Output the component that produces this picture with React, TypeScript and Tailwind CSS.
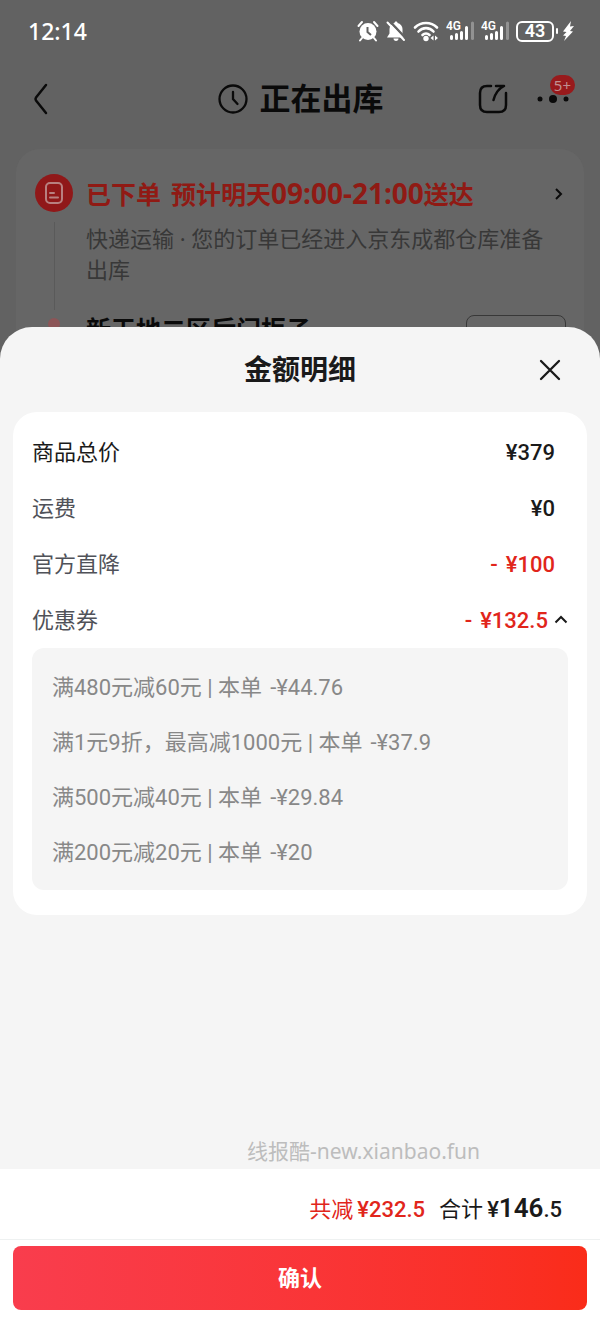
import { useState } from 'react'

const summaryRows = [
  { label: '商品总价', value: '¥379', strong: true, discount: false },
  { label: '运费', value: '¥0', strong: false, discount: false },
  { label: '官方直降', value: '¥100', strong: false, discount: true },
]

const coupons = [
  { rule: '满480元减60元', value: '-¥44.76' },
  { rule: '满1元9折，最高减1000元', value: '-¥37.9' },
  { rule: '满500元减40元', value: '-¥29.84' },
  { rule: '满200元减20元', value: '-¥20' },
]

const SignalIcon = () => (
  <svg viewBox="0 0 28 22" className="h-[22px] w-7" aria-hidden="true">
    <text x="0" y="10" fontSize="12" fontWeight="600" fill="#fff" fontFamily="Roboto, sans-serif">
      4G
    </text>
    <g strokeWidth="3" strokeLinecap="round">
      <path d="M5.5 18.5v-2M10.500 18.500v-4M15.500 18.500v-6M20.500 18.500v-11" stroke="#fff" />
      <path d="M26.500 18.500V3" stroke="#929292" />
    </g>
  </svg>
)

const StatusBar = () => (
  <div className="flex h-[62px] items-center justify-between pl-7 pr-[26px] text-white">
    <time className="text-[23px] font-medium">12:14</time>
    <div className="flex items-center gap-[7px]">
      <svg viewBox="0 0 22 22" className="size-[22px]" fill="none" stroke="#fff" aria-hidden="true">
        <circle cx="11" cy="11.500" r="8.500" fill="#fff" stroke="none" />
        <path d="M1.500 6 5 2M20.500 6 17 2M5 18l-2 2.500M17 18l2 2.500" strokeWidth="2" strokeLinecap="round" />
        <path d="M10.500 7v5l3.500 3" stroke="#626262" strokeWidth="2" />
      </svg>
      <svg viewBox="0 0 20 22" className="h-[22px] w-5" aria-hidden="true">
        <path d="M10 1.500c1 0 1.500.6 1.500 1.400C14.500 3.600 16.500 6 16.500 9v4.500l2.500 4H1l2.500-4V9c0-3 2-5.400 5-6.100 0-.8.5-1.400 1.500-1.400Z" fill="#fff" />
        <path d="M7.500 18.500h5c0 1.500-1 2.500-2.500 2.500s-2.500-1-2.500-2.500Z" fill="#fff" />
        <path d="m3.500 1 16 17" stroke="#626262" strokeWidth="2.500" />
        <path d="m1.500 2.500 16.500 17.500" stroke="#fff" strokeWidth="2" strokeLinecap="round" />
      </svg>
      <svg viewBox="0 0 26 22" className="h-[22px] w-[26px]" fill="none" stroke="#fff" strokeWidth="2.600" strokeLinecap="round" aria-hidden="true">
        <path d="M2 7.500c6-6 16-6 22 0M5.500 11.500c4-4.500 11-4.500 15 0M9.500 15c2-2 5-2 7 0" />
        <circle cx="13" cy="18.500" r="2.700" fill="#fff" stroke="none" />
        <path d="m20.500 15.500-3 2.500 3 2.500v-5ZM22 15.500l3 2.500-3 2.500v-5Z" fill="#fff" stroke="none" />
      </svg>
      <SignalIcon />
      <SignalIcon />
      <div className="flex items-center">
        <span className="flex h-[21px] w-[38px] items-center justify-center rounded-[6px] border-2 border-white font-[Roboto] text-lg font-semibold leading-none">
          43
        </span>
        <span className="ml-0.5 h-1.5 w-0.5 rounded bg-white" />
        <svg viewBox="0 0 12 22" className="ml-1 h-[22px] w-3" fill="#fff" aria-hidden="true">
          <path d="M9 1 1 11.500l3.500.5L1 15.500l3 .5-2 5 9-9.500-3-.5 4-5-4 .5Z" />
        </svg>
      </div>
    </div>
  </div>
)

const OrderHeader = () => (
  <header className="flex h-[87px] items-center justify-between pb-[14px] pl-7 pr-[27px] text-[#0a0a0a]">
    <button aria-label="返回" className="w-24">
      <svg viewBox="0 0 26 34" className="h-[34px] w-[26px]" fill="none" stroke="currentColor" strokeWidth="2.500" strokeLinecap="round" strokeLinejoin="round">
        <path d="M18 3 8 15.500q-1 1.500 0 3L18 31" />
      </svg>
    </button>
    <h1 className="flex items-center gap-3 text-[31px] font-bold">
      <svg viewBox="0 0 30 30" className="size-[30px]" fill="none" stroke="currentColor" strokeWidth="2.300" strokeLinecap="round" aria-hidden="true">
        <circle cx="15" cy="15" r="13.500" />
        <path d="M15 8v7l4.500 5" />
      </svg>
      正在出库
    </h1>
    <div className="flex items-center gap-6">
      <button aria-label="分享">
        <svg viewBox="0 0 32 32" className="size-8" fill="none" stroke="currentColor" strokeWidth="2.500" strokeLinecap="round" strokeLinejoin="round">
          <path d="M14 3h-4Q3 3 3 10v12q0 7 7 7h12q7 0 7-7V10" />
          <path d="M19 3h8c-6 3-9 8-10.500 14" />
        </svg>
      </button>
      <button aria-label="更多" className="relative">
        <svg viewBox="0 0 40 32" className="h-8 w-10" fill="currentColor">
          <circle cx="7" cy="16" r="2.500" />
          <circle cx="20" cy="16" r="4" />
          <circle cx="33" cy="16" r="2.500" />
        </svg>
        <span className="absolute -right-0.5 -top-2 rounded-full bg-[#981a1c] px-1 text-[15px] leading-5 text-[#c09090]">5+</span>
      </button>
    </div>
  </header>
)

const DeliveryCard = () => (
  <section className="mx-4 flex h-[220px] gap-[13px] rounded-3xl bg-[#666] pl-[19px] pr-[18px] pt-[25px]">
    <div className="flex w-[38px] flex-col items-center">
      <span className="flex size-[38px] shrink-0 items-center justify-center rounded-full bg-[#901819]">
        <svg viewBox="0 0 22 24" className="h-6 w-[22px]" fill="none" stroke="#b88080" strokeWidth="2" strokeLinecap="round" aria-hidden="true">
          <rect x="3" y="2" width="16" height="20" rx="4" />
          <path d="M7 12h4M7 16.500h8" />
        </svg>
      </span>
      <span className="mt-2.5 h-[88px] w-px bg-[#5a5a5a]" />
      <span className="mt-2 size-3 rounded-full bg-[#8c5557]" />
    </div>
    <div className="min-w-0 flex-1">
      <div className="flex items-center justify-between">
        <h2 className="flex items-baseline text-[25px] font-bold leading-[38px] text-[#901a14]">
          <span className="mr-2.5">已下单</span>
          <span>预计明天</span>
          <span className="text-[28px]">09:00-21:00</span>
          <span>送达</span>
        </h2>
        <svg viewBox="0 0 12 16" className="h-4 w-3" fill="none" stroke="#0a0a0a" strokeWidth="2" aria-hidden="true">
          <path d="m2 3 5 5-5 5" />
        </svg>
      </div>
      <p className="mt-2.5 pr-3.5 text-[22px] leading-[31px] text-[#383838]">快递运输 · 您的订单已经进入京东成都仓库准备出库</p>
      <div className="mt-6 flex justify-between">
        <strong className="text-[25px] leading-10 text-[#0a0a0a]">新天地二区后门柜子</strong>
        <button aria-label="修改地址" className="mt-1.5 h-10 w-[100px] rounded-lg border border-[#383838]" />
      </div>
    </div>
  </section>
)

const PriceSheet = () => {
  const [showCoupons, setShowCoupons] = useState(true)

  return (
    <div
      role="dialog"
      aria-labelledby="sheet-title"
      className="flex flex-1 flex-col rounded-t-[32px] bg-[#f5f5f5] font-[Roboto,'Noto_Sans_CJK_SC',sans-serif] text-[#1a1a1a]"
    >
      <header className="grid h-[85px] grid-cols-[1fr_auto_1fr] items-center px-9">
        <h2 id="sheet-title" className="col-start-2 pt-0.5 text-[28px] font-bold">金额明细</h2>
        <button aria-label="关闭" className="justify-self-end">
          <svg viewBox="0 0 28 28" className="size-7" fill="none" stroke="currentColor" strokeWidth="2.300" strokeLinecap="round">
            <path d="m5 5 18 18M23 5 5 23" />
          </svg>
        </button>
      </header>

      <section className="mx-[13px] rounded-3xl bg-white px-[19px] pb-[25px] pt-3 text-[22px]">
        <dl>
          {summaryRows.map((row) => (
            <div key={row.label} className="flex h-14 items-center justify-between pr-[13px]">
              <dt className={row.strong ? 'text-[#1a1a1a]' : 'text-[#505259]'}>{row.label}</dt>
              <dd className={`flex gap-2 font-medium ${row.discount ? 'text-[#e1251b]' : 'text-[#1a1a1a]'}`}>
                {row.discount && <span>-</span>}
                {row.value}
              </dd>
            </div>
          ))}
          <div className="flex h-14 items-center justify-between">
            <dt className="text-[#505259]">优惠券</dt>
            <dd>
              <button
                aria-expanded={showCoupons}
                onClick={() => setShowCoupons(!showCoupons)}
                className="flex items-center gap-1.5 font-medium text-[#e1251b]"
              >
                <span className="flex gap-2">
                  <span>-</span>¥132.5
                </span>
                <svg viewBox="0 0 14 10" className={`h-2.5 w-3.5 ${showCoupons ? '' : 'rotate-180'}`} fill="none" stroke="#1a1a1a" strokeWidth="2">
                  <path d="m1.500 7.500 5.500-5.500 5.500 5.500" />
                </svg>
              </button>
            </dd>
          </div>
        </dl>
        {showCoupons && (
          <ul className="rounded-xl bg-[#f5f5f5] px-5 pb-2.5 pt-3 text-[#888]">
            {coupons.map((coupon) => (
              <li key={coupon.rule} className="flex gap-2 leading-[55px]">
                <span>{coupon.rule} | 本单</span>
                <span>{coupon.value}</span>
              </li>
            ))}
          </ul>
        )}
      </section>

      <p className="mt-auto pb-1 pl-[247px] font-['Noto_Sans','Noto_Sans_CJK_SC',sans-serif] text-[21px] leading-7 text-[#bdbdbd]">
        线报酷-new.xianbao.fun
      </p>

      <footer className="bg-white">
        <div className="flex h-[71px] items-baseline justify-end border-b border-[#eef1f1] pr-[38px] pt-5 text-[22px]">
          <span className="mr-1 text-[#e1251b]">共减</span>
          <span className="mr-3.5 font-medium text-[#e1251b]">¥232.5</span>
          <span className="mr-1">合计</span>
          <span className="font-medium">¥</span>
          <span className="text-[26px] font-semibold">146</span>
          <span className="font-medium">.5</span>
        </div>
        <div className="px-[13px] pb-[13px] pt-1.5">
          <button className="h-16 w-full rounded-lg bg-linear-to-r from-[#f93d4d] to-[#fa2c19] text-[22px] font-bold text-white">
            确认
          </button>
        </div>
      </footer>
    </div>
  )
}

// The order page stays dimmed behind the open price sheet
const App = () => (
  <main className="relative flex min-h-screen flex-col font-['Noto_Sans','Noto_Sans_CJK_SC',sans-serif]">
    <div className="absolute inset-0 overflow-hidden bg-[#626262] pt-[62px]">
      <OrderHeader />
      <DeliveryCard />
    </div>
    <div className="relative flex flex-1 flex-col">
      <div className="h-[327px]">
        <StatusBar />
      </div>
      <PriceSheet />
    </div>
  </main>
)

export default App
